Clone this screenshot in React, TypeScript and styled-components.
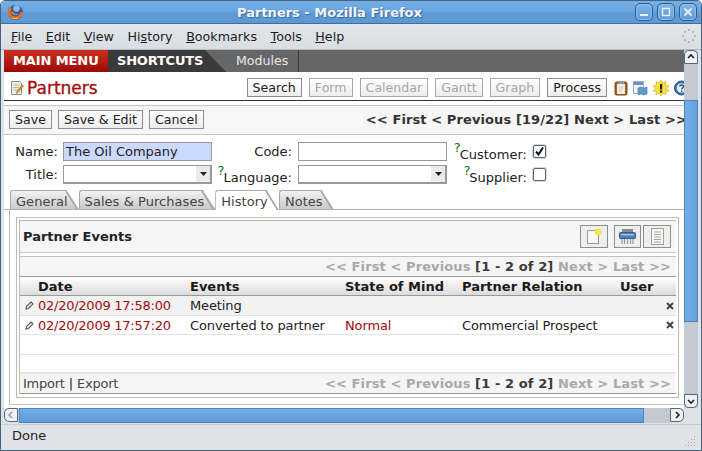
import React from "react";
import styled, { createGlobalStyle } from "styled-components";

const Global = createGlobalStyle`
    html, body { margin: 0; padding: 0; background: #ffffff; }
    * { box-sizing: border-box; }
    body { font-family: "DejaVu Sans", Verdana, sans-serif; font-size: 13px; color: #222; }
`;

const Window = styled.div`
    width: 702px;
    height: 451px;
    display: flex;
    flex-direction: column;
    border: 1px solid #47627f;
    border-radius: 5px 5px 0 0;
    background: #dfe3e8;
    overflow: hidden;
`;

/* ---- window chrome ---- */
const TitleBar = styled.div`
    height: 23px;
    flex: none;
    display: flex;
    align-items: center;
    padding: 0 4px 0 5px;
    border-bottom: 1px solid #3f6f9f;
    background: linear-gradient(#74afe8 0%, #6aa5e0 45%, #5e9ad6 55%, #5d98d4 100%);
`;
const TitleText = styled.div`
    flex: 1;
    text-align: center;
    color: #f2f6fb;
    font-weight: bold;
    text-shadow: 1px 1px 1px #3a6a9c;
`;
const WinButtons = styled.div`
    display: flex;
    gap: 4px;
`;
const WinButton = styled.div`
    width: 18px;
    height: 18px;
    display: flex;
    align-items: center;
    justify-content: center;
    border: 1px solid #2f5c8c;
    border-radius: 5px;
    background: linear-gradient(#80b6ea, #5f9bd8);
    box-shadow: inset 0 0 0 1px #8fbdea;
`;
const MenuBar = styled.div`
    height: 26px;
    flex: none;
    display: flex;
    align-items: center;
    gap: 13.5px;
    padding: 0 5px 1px 10px;
    border-bottom: 1px solid #b4bbc3;
    background: linear-gradient(#e2e6ea, #d9dee4);
    color: #1c1c1c;
    font-size: 12.7px;
`;
const Throbber = styled.svg`
    margin-left: auto;
`;
const Middle = styled.div`
    height: 358px;
    flex: none;
    display: flex;
    padding: 0 3px;
`;
const Viewport = styled.div`
    width: 680px;
    height: 358px;
    overflow: hidden;
    background: #ffffff;
`;
const Page = styled.div`
    width: 694px;
    display: flex;
    flex-direction: column;
`;
const VScroll = styled.div`
    width: 14px;
    display: flex;
    flex-direction: column;
    background: #c3cad2;
`;
const ScrollButton = styled.div<{ $round: string }>`
    width: 14px;
    height: 14px;
    flex: none;
    display: flex;
    align-items: center;
    justify-content: center;
    border: 1px solid #51697f;
    border-radius: ${(p) => p.$round};
    background: #eef0f3;
`;
const Trough = styled.div<{ $size: number }>`
    flex: ${(p) => (p.$size ? `0 0 ${p.$size}px` : "1")};
`;
const VThumb = styled.div`
    flex: 0 0 222px;
    border: 1px solid #4b84c0;
    background: linear-gradient(90deg, #74ade6, #659fdc);
`;
const HScroll = styled.div`
    height: 16px;
    flex: none;
    display: flex;
    padding: 0 17px 1px 3px;
`;
const HTrack = styled.div`
    flex: 1;
    display: flex;
    background: #c3cad2;
    padding-left: 1px;
`;
const HThumb = styled.div`
    flex: 0 0 625px;
    border: 1px solid #4b84c0;
    background: linear-gradient(#74ade6, #5f9ad8);
`;
const StatusBar = styled.div`
    flex: 1;
    display: flex;
    align-items: center;
    justify-content: space-between;
    padding: 0 4px 5px 11px;
    border-top: 1px solid #c6ccd3;
    color: #222;
`;

/* ---- application nav ---- */
const Nav = styled.div`
    height: 22px;
    flex: none;
    display: flex;
    background: #666666;
    color: #ffffff;
`;
const MainTab = styled.div`
    width: 104px;
    padding-left: 9px;
    line-height: 22px;
    font-weight: bold;
    white-space: nowrap;
    letter-spacing: -0.1px;
    background: linear-gradient(#c8321c, #9c0a08);
`;
const ShortcutTab = styled.div`
    width: 118px;
    padding-left: 9px;
    line-height: 22px;
    font-weight: bold;
    white-space: nowrap;
    letter-spacing: -0.2px;
    background: #3a3a3a;
    clip-path: polygon(0 0, 97px 0, 100% 100%, 0 100%);
`;
const ModuleTab = styled.div`
    width: 73px;
    padding-left: 10px;
    line-height: 22px;
    color: #e8e8e8;
    font-size: 12.6px;
    border-right: 1px solid #3c3c3c;
`;
const TitleRow = styled.div`
    height: 29px;
    flex: none;
    display: flex;
    align-items: center;
    padding: 3px 0 0 6px;
    border-bottom: 1px solid #333333;
`;
const PageTitle = styled.div`
    margin-left: 2px;
    color: #a30c0c;
    font-size: 17px;
    -webkit-text-stroke: 0.3px #a30c0c;
`;
const ViewButtons = styled.div`
    margin-left: auto;
    display: flex;
    gap: 7px;
    margin-right: 7px;
`;
const Btn = styled.div<{ $off?: boolean }>`
    height: 19px;
    padding: 0 5px;
    font-size: 12.6px;
    line-height: 17px;
    white-space: nowrap;
    border: 1px solid ${(p) => (p.$off ? "#a8a8a8" : "#8e8e8e")};
    background: linear-gradient(#ffffff, #ededed);
    color: ${(p) => (p.$off ? "#a6a6a6" : "#222")};
`;
const HelpIcons = styled.div`
    width: 84px;
    display: flex;
    gap: 5px;
    align-items: center;
`;
const Spacer = styled.div`
    height: 5px;
    flex: none;
    border-bottom: 1px solid #c9c7bd;
`;
const Actions = styled.div`
    height: 29px;
    flex: none;
    display: flex;
    gap: 6px;
    padding: 4px 11px 5px 5px;
    background: #f6f6f6;
    border-bottom: 1px solid #c9c7bd;
`;
const Pager = styled.div<{ $dim?: boolean }>`
    margin-left: auto;
    font-weight: bold;
    white-space: nowrap;
    letter-spacing: 0.1px;
    color: ${(p) => (p.$dim ? "#a9a9a9" : "#333")};
    line-height: 19px;
`;
const PagerNow = styled.span`
    color: #3a3a3a;
`;

/* ---- form ---- */
const Form = styled.div`
    height: 55px;
    flex: none;
    display: grid;
    grid-template-columns: 59px 149px 86px 149px 86px 40px;
    grid-auto-rows: 19px;
    row-gap: 4px;
    padding-top: 7px;
    align-items: center;
`;
const Label = styled.div<{ $pad: number }>`
    text-align: right;
    padding-right: ${(p) => p.$pad}px;
    white-space: nowrap;
    color: #222;
`;
const Hint = styled.span`
    position: relative;
    top: -4px;
    margin-right: -1px;
    color: #0a7a0a;
`;
const LowLabel = styled.span`
    position: relative;
    top: 3px;
`;
const TextBox = styled.div<{ $bg?: string }>`
    height: 19px;
    padding-left: 2px;
    line-height: 17px;
    border: 1px solid #999999;
    background: ${(p) => p.$bg || "#ffffff"};
    white-space: nowrap;
`;
const SelectBox = styled.div`
    height: 19px;
    display: flex;
    justify-content: flex-end;
    border: 1px solid #999999;
    border-right-width: 2px;
    border-bottom-width: 2px;
`;
const SelectArrow = styled.div`
    width: 14px;
    display: flex;
    align-items: center;
    justify-content: center;
    background: #e9ecef;
`;
const Check = styled.div`
    width: 13px;
    height: 13px;
    display: flex;
    align-items: center;
    justify-content: center;
    border: 1px solid #5a6470;
    border-radius: 2px;
    background: #ffffff;
    box-shadow: 0 0 0 1px #d4d8de;
`;

/* ---- tabs ---- */
const TabStrip = styled.div`
    height: 20px;
    flex: none;
    display: flex;
    padding-left: 6px;
    border-bottom: 1px solid #b3b3b3;
`;
const Tab = styled.div<{ $active?: boolean }>`
    position: relative;
    height: ${(p) => (p.$active ? "20px" : "19px")};
    padding: 0 11px 0 5px;
    line-height: 22px;
    white-space: nowrap;
    letter-spacing: 0.05px;
    color: #444;
    border-top: 1px solid #aaaaaa;
    border-left: 1px solid #aaaaaa;
    border-radius: 3px 0 0 0;
    background: ${(p) => (p.$active ? "#ffffff" : "linear-gradient(#f2f2f2, #c9c9c9)")};
    clip-path: polygon(0 0, calc(100% - 12px) 0, 100% 100%, 0 100%);
    &::after {
        content: "";
        position: absolute;
        top: -2px;
        right: 5px;
        width: 2px;
        height: 26px;
        background: #aaaaaa;
        transform: rotate(-32deg);
    }
`;
const Panel = styled.div`
    margin-left: 5px;
    padding: 7px 0 6px 6px;
    border-left: 1px solid #c4c2b8;
    border-bottom: 1px solid #c4c2b8;
`;
const Frame = styled.div`
    width: 663px;
    height: 181px;
    padding: 2px;
    border: 1px solid #bdbbb0;
`;
const Inner = styled.div`
    border-top: 1px solid #bdbbb0;
    border-left: 1px solid #bdbbb0;
`;
const PanelHead = styled.div`
    height: 32px;
    display: flex;
    align-items: center;
    padding: 0 5px 1px 3px;
    background: #f5f5f5;
    border-bottom: 1px solid #c9c7bd;
`;
const PanelTitle = styled.div`
    font-weight: bold;
    color: #222;
`;
const IconBtns = styled.div`
    margin-left: auto;
    display: flex;
    gap: 2px;
`;
const IconBtn = styled.div<{ $w?: number; $gap?: number }>`
    width: ${(p) => p.$w || 28}px;
    height: 23px;
    margin-right: ${(p) => p.$gap || 0}px;
    display: flex;
    align-items: center;
    justify-content: center;
    border: 1px solid #8e8e8e;
    background: #eeeeee;
`;
const TableGap = styled.div`
    height: 3px;
`;
const PagerRow = styled.div`
    height: 20px;
    display: flex;
    padding-right: 5px;
    background: #f5f5f5;
    border-top: 1px solid #c0c0c0;
`;
const Cols = styled.div`
    display: grid;
    grid-template-columns: 18px 152px 155px 117px 158px 56px;
    align-items: center;
    white-space: nowrap;
`;
const HeadRow = styled(Cols)`
    height: 20px;
    font-weight: bold;
    color: #1a1a1a;
    border-top: 1px solid #9a9a9a;
    border-bottom: 1px solid #9a9a9a;
    background: linear-gradient(#ffffff, #dcdcdc);
`;
const Row = styled(Cols)<{ $h: number; $bg?: string }>`
    height: ${(p) => p.$h}px;
    letter-spacing: -0.12px;
    background: ${(p) => p.$bg || "#ffffff"};
    border-bottom: 1px solid #e4e4e4;
`;
const Dated = styled.div`
    color: #a30c0c;
    letter-spacing: -0.25px;
`;
const Reddish = styled.div`
    color: #a30c0c;
`;
const EditCell = styled.div`
    display: flex;
    padding-left: 5px;
`;
const DelCell = styled.div`
    display: flex;
    justify-content: flex-end;
    padding-right: 2px;
`;
const Foot = styled.div`
    height: 21px;
    display: flex;
    align-items: center;
    padding: 0 5px 0 3px;
    background: #f5f5f5;
    border-top: 1px solid #e4e4e4;
    border-bottom: 1px solid #9a9a9a;
    color: #444;
`;
const FootLink = styled.span`
    letter-spacing: -0.25px;
`;
const FootBar = styled.span`
    margin: 0 4px;
    color: #111;
`;
const Grip = styled.svg`
    align-self: flex-end;
    margin-bottom: -2px;
`;

const Chevron = ({ dir }: { dir: "up" | "down" | "left" | "right" }) => {
    const pts = {
        up: "2,6 5,3 8,6",
        down: "2,4 5,7 8,4",
        left: "6,2 3,5 6,8",
        right: "4,2 7,5 4,8",
    }[dir];
    return (
        <svg width="10" height="10" viewBox="0 0 10 10">
            <polyline points={pts} fill="none" stroke={dir === "left" ? "#9aa2aa" : "#222"} strokeWidth="1.6" />
        </svg>
    );
};

const FirefoxIcon = () => (
    <svg width="17" height="17" viewBox="0 0 17 17" style={{ flex: "none", marginLeft: 1 }}>
        <circle cx="8.5" cy="8.5" r="7.5" fill="#2f5fa8" />
        <circle cx="9.5" cy="4.500" r="3.200" fill="#8fbce4" />
        <path d="M3.800 3.500A6.300 6.300 0 1 0 14.800 8" fill="none" stroke="#e8701a" strokeWidth="2.800" />
        <path d="M4 8c1 3 5 4 8 2-2 .2-3.800 0-5-1-1-.8-1.500-1.500-3-1z" fill="#f08a24" />
        <path d="M3.500 13.500c2.500 2 6.500 2 9 0-3 .8-6 .8-9 0z" fill="#f6c23a" />
    </svg>
);

const PageIcon = () => (
    <svg width="15" height="16" viewBox="0 0 15 16" style={{ flex: "none" }}>
        <path d="M1.500 1.500h8l2 2v11h-10z" fill="#efeeea" stroke="#8e8c86" />
        <path d="M3.500 5h6M3.500 7.500h5M3.500 10h4" stroke="#b0aea6" />
        <path d="M13.500 6l-5 6-2 1.500.5-2.500 5-6z" fill="#e8961e" stroke="#a8640e" strokeWidth=".6" />
    </svg>
);

const ClipboardIcon = () => (
    <svg width="14" height="16" viewBox="0 0 14 16">
        <rect x="1" y="2" width="12" height="13" rx="1.500" fill="#a5651f" stroke="#7d4a12" />
        <rect x="3" y="4" width="8" height="10" fill="#f0eee6" />
        <rect x="4" y="1" width="6" height="3" fill="#9a9a92" />
        <path d="M5 7h4M5 9h4M5 11h3" stroke="#c8c6bc" />
    </svg>
);

const WindowsIcon = () => (
    <svg width="15" height="16" viewBox="0 0 15 16">
        <rect x=".5" y="1.500" width="10" height="12" fill="#f0f3f7" stroke="#9fb0c4" />
        <rect x="1" y="2" width="9" height="3" fill="#6a94c4" />
        <path d="M5 8l3-1 3 1 3-1v7l-3 1-3-1-3 1z" fill="#5f9bd0" stroke="#3f77a8" strokeWidth=".6" />
    </svg>
);

const AlertIcon = () => (
    <svg width="16" height="16" viewBox="0 0 16 16">
        <path d="M8 0l1.800 3 3-1.500-.2 3.400L16 6l-2.500 2.200L16 11l-3.400.5.200 3-3-1.200L8 16l-1.800-2.700-3 1.200.2-3L0 11l2.500-2.800L0 6l3.400-1.100-.2-3.400 3 1.500z" fill="#f5e23c" stroke="#c9a923" strokeWidth=".6" />
        <rect x="7" y="4" width="2.200" height="5.500" fill="#222" />
        <rect x="7" y="10.500" width="2.200" height="2.200" fill="#222" />
    </svg>
);

const HelpIcon = () => (
    <svg width="15" height="16" viewBox="0 0 15 16" style={{ flex: "none" }}>
        <circle cx="7.500" cy="8" r="7" fill="#3f6cb0" stroke="#2a4f8c" />
        <circle cx="7.500" cy="8" r="4.800" fill="#e8eef6" />
        <path d="M5.500 6.500c.3-2 4-2 4 0 0 1.500-1.800 1.500-1.800 3M7.700 10.500v1.500" fill="none" stroke="#2a4f8c" strokeWidth="1.400" />
    </svg>
);

const NewIcon = () => (
    <svg width="16" height="17" viewBox="0 0 16 17">
        <rect x="1.500" y="2.500" width="11" height="13" fill="#f7f7f3" stroke="#9c9c94" />
        <circle cx="12" cy="4" r="3" fill="#f4ea4a" stroke="#e8d820" strokeWidth=".6" />
    </svg>
);

const PrintIcon = () => (
    <svg width="17" height="17" viewBox="0 0 17 17">
        <rect x="3" y="1" width="11" height="4" fill="#8a8a8a" />
        <rect x=".5" y="4.500" width="16" height="6" rx="1" fill="#4f7fb8" stroke="#2f5c92" />
        <rect x="2" y="6" width="13" height="1.500" fill="#9cc0e6" />
        <path d="M3 11v5M5.500 11v5M8.500 11v5M11.500 11v5M14 11v5" stroke="#9a9a9a" strokeWidth="1.200" />
    </svg>
);

const ListIcon = () => (
    <svg width="13" height="17" viewBox="0 0 13 17">
        <rect x=".5" y=".5" width="12" height="16" fill="#f7f7f3" stroke="#a0a098" />
        <path d="M3 4h7M3 6.500h7M3 9h7M3 11.500h7M3 14h7" stroke="#a8a8a0" />
    </svg>
);

const Pencil = () => (
    <svg width="9" height="9" viewBox="0 0 9 9">
        <path d="M6 1l2 2-4.500 4.500L1 8l.5-2.500z" fill="#f0f0f0" stroke="#555" strokeWidth="1.100" />
    </svg>
);

const Cross = () => (
    <svg width="8" height="8" viewBox="0 0 8 8">
        <path d="M1 1l6 6M7 1l-6 6" stroke="#444" strokeWidth="2" />
    </svg>
);

const SmallPager = () => (
    <Pager $dim>
        {"<< First < Previous "}
        <PagerNow>[1 - 2 of 2]</PagerNow>
        {" Next > Last >>"}
    </Pager>
);

const App: React.FC = () => {
    return (
        <Window>
            <Global />
            <TitleBar>
                <FirefoxIcon />
                <TitleText>Partners - Mozilla Firefox</TitleText>
                <WinButtons>
                    <WinButton>
                        <svg width="10" height="10" viewBox="0 0 10 10"><rect x="1" y="7" width="8" height="2" fill="#e8f0f8" /></svg>
                    </WinButton>
                    <WinButton>
                        <svg width="10" height="10" viewBox="0 0 10 10"><rect x="1.500" y="1.500" width="7" height="7" fill="none" stroke="#e8f0f8" strokeWidth="1.400" /></svg>
                    </WinButton>
                    <WinButton>
                        <svg width="10" height="10" viewBox="0 0 10 10"><path d="M1.500 1.500l7 7M8.500 1.500l-7 7" stroke="#e8f0f8" strokeWidth="1.800" /></svg>
                    </WinButton>
                </WinButtons>
            </TitleBar>
            <MenuBar>
                <span><u>F</u>ile</span>
                <span><u>E</u>dit</span>
                <span><u>V</u>iew</span>
                <span>Hi<u>s</u>tory</span>
                <span><u>B</u>ookmarks</span>
                <span><u>T</u>ools</span>
                <span><u>H</u>elp</span>
                <Throbber width="14" height="14" viewBox="0 0 14 14">
                    <g fill="#b4b8bd">
                        <rect x="6" y="0" width="2" height="2" />
                        <rect x="10" y="2" width="2" height="2" />
                        <rect x="12" y="6" width="2" height="2" />
                        <rect x="10" y="10" width="2" height="2" />
                        <rect x="6" y="12" width="2" height="2" />
                        <rect x="2" y="10" width="2" height="2" />
                        <rect x="0" y="6" width="2" height="2" />
                        <rect x="2" y="2" width="2" height="2" />
                    </g>
                </Throbber>
            </MenuBar>
            <Middle>
                <Viewport>
                    <Page>
                        <Nav>
                            <MainTab>MAIN MENU</MainTab>
                            <ShortcutTab>SHORTCUTS</ShortcutTab>
                            <ModuleTab>Modules</ModuleTab>
                        </Nav>
                        <TitleRow>
                            <PageIcon />
                            <PageTitle>Partners</PageTitle>
                            <ViewButtons>
                                <Btn>Search</Btn>
                                <Btn $off>Form</Btn>
                                <Btn $off>Calendar</Btn>
                                <Btn $off>Gantt</Btn>
                                <Btn $off>Graph</Btn>
                                <Btn>Process</Btn>
                            </ViewButtons>
                            <HelpIcons>
                                <ClipboardIcon />
                                <WindowsIcon />
                                <AlertIcon />
                                <HelpIcon />
                            </HelpIcons>
                        </TitleRow>
                        <Spacer />
                        <Actions>
                            <Btn>Save</Btn>
                            <Btn>Save &amp; Edit</Btn>
                            <Btn>Cancel</Btn>
                            <Pager>{"<< First < Previous [19/22] Next > Last >>"}</Pager>
                        </Actions>
                        <Form>
                            <Label $pad={5}>Name:</Label>
                            <TextBox $bg="#ccd9ff">The Oil Company</TextBox>
                            <Label $pad={6}>Code:</Label>
                            <TextBox />
                            <Label $pad={6}><Hint>?</Hint><LowLabel>Customer:</LowLabel></Label>
                            <Check>
                                <svg width="11" height="11" viewBox="0 0 11 11"><path d="M2 5.500l2.500 3L9 1.500" fill="none" stroke="#111" strokeWidth="2" /></svg>
                            </Check>
                            <Label $pad={5}>Title:</Label>
                            <SelectBox>
                                <SelectArrow>
                                    <svg width="7" height="4" viewBox="0 0 7 4"><path d="M0 0h7L3.500 4z" fill="#222" /></svg>
                                </SelectArrow>
                            </SelectBox>
                            <Label $pad={6}><Hint>?</Hint><LowLabel>Language:</LowLabel></Label>
                            <SelectBox>
                                <SelectArrow>
                                    <svg width="7" height="4" viewBox="0 0 7 4"><path d="M0 0h7L3.500 4z" fill="#222" /></svg>
                                </SelectArrow>
                            </SelectBox>
                            <Label $pad={6}><Hint>?</Hint><LowLabel>Supplier:</LowLabel></Label>
                            <Check />
                        </Form>
                        <TabStrip>
                            <Tab>General</Tab>
                            <Tab>Sales &amp; Purchases</Tab>
                            <Tab $active>History</Tab>
                            <Tab>Notes</Tab>
                        </TabStrip>
                        <Panel>
                            <Frame>
                                <Inner>
                                    <PanelHead>
                                        <PanelTitle>Partner Events</PanelTitle>
                                        <IconBtns>
                                            <IconBtn $gap={4}><NewIcon /></IconBtn>
                                            <IconBtn $w={27}><PrintIcon /></IconBtn>
                                            <IconBtn><ListIcon /></IconBtn>
                                        </IconBtns>
                                    </PanelHead>
                                    <TableGap />
                                    <PagerRow><SmallPager /></PagerRow>
                                    <HeadRow>
                                        <div />
                                        <div>Date</div>
                                        <div>Events</div>
                                        <div>State of Mind</div>
                                        <div>Partner Relation</div>
                                        <div>User</div>
                                    </HeadRow>
                                    <Row $h={20} $bg="#f2f2f2">
                                        <EditCell><Pencil /></EditCell>
                                        <Dated>02/20/2009 17:58:00</Dated>
                                        <div>Meeting</div>
                                        <div />
                                        <div />
                                        <DelCell><Cross /></DelCell>
                                    </Row>
                                    <Row $h={19}>
                                        <EditCell><Pencil /></EditCell>
                                        <Dated>02/20/2009 17:57:20</Dated>
                                        <div>Converted to partner</div>
                                        <Reddish>Normal</Reddish>
                                        <div>Commercial Prospect</div>
                                        <DelCell><Cross /></DelCell>
                                    </Row>
                                    <Row $h={20} />
                                    <Row $h={18} />
                                    <Foot>
                                        <FootLink>Import</FootLink>
                                        <FootBar>|</FootBar>
                                        <FootLink>Export</FootLink>
                                        <SmallPager />
                                    </Foot>
                                </Inner>
                            </Frame>
                        </Panel>
                    </Page>
                </Viewport>
                <VScroll>
                    <ScrollButton $round="5px 5px 0 0"><Chevron dir="up" /></ScrollButton>
                    <Trough $size={36} />
                    <VThumb />
                    <Trough $size={0} />
                    <ScrollButton $round="0 0 5px 5px"><Chevron dir="down" /></ScrollButton>
                </VScroll>
            </Middle>
            <HScroll>
                <ScrollButton $round="5px 0 0 5px"><Chevron dir="left" /></ScrollButton>
                <HTrack><HThumb /></HTrack>
                <ScrollButton $round="0 5px 5px 0"><Chevron dir="right" /></ScrollButton>
            </HScroll>
            <StatusBar>
                <span>Done</span>
                <Grip width="12" height="12" viewBox="0 0 12 12">
                    <g fill="#a8aeb5">
                        <rect x="9" y="1" width="1" height="1" />
                        <rect x="6" y="4" width="1" height="1" />
                        <rect x="9" y="4" width="1" height="1" />
                        <rect x="3" y="7" width="1" height="1" />
                        <rect x="6" y="7" width="1" height="1" />
                        <rect x="9" y="7" width="1" height="1" />
                        <rect x="0" y="10" width="1" height="1" />
                        <rect x="3" y="10" width="1" height="1" />
                        <rect x="6" y="10" width="1" height="1" />
                        <rect x="9" y="10" width="1" height="1" />
                    </g>
                </Grip>
            </StatusBar>
        </Window>
    );
};

export default App;
